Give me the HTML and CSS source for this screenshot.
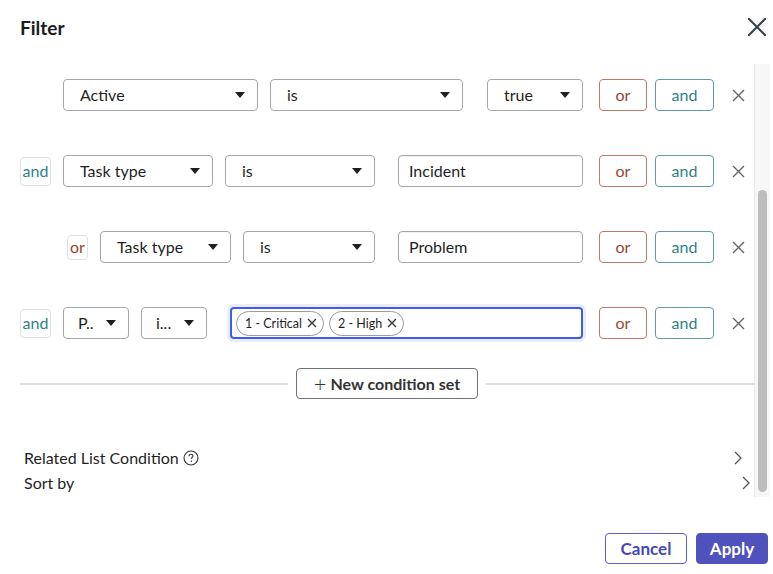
FILE: index.html
```html
<!DOCTYPE html>
<html lang="en">
<head>
    <meta charset="UTF-8">
    <title>Filter</title>
    <link rel="stylesheet" href="styles.css">
</head>
<body>
<div class="dialog">

    <!-- Header -->
    <header class="head">
        <h1>Filter</h1>
        <button class="close" aria-label="Close">
            <svg width="18" height="18" viewBox="0 0 18 18"><path d="M1 1 L17 17 M17 1 L1 17" stroke="#3a4250" stroke-width="2.2" stroke-linecap="round" fill="none"/></svg>
        </button>
    </header>

    <div class="body">
        <div class="scroll">

            <!-- Condition 1 -->
            <div class="row">
                <div class="cond first">
                    <div class="select w-active">Active</div>
                    <div class="select w-is1">is</div>
                    <div class="select value w-true">true</div>
                </div>
                <div class="actions">
                    <button class="btn-or">or</button>
                    <button class="btn-and">and</button>
                    <span class="remove"><svg width="13" height="13" viewBox="0 0 13 13"><path d="M1 1 L12 12 M12 1 L1 12" stroke="#666" stroke-width="1.4" fill="none"/></svg></span>
                </div>
            </div>

            <!-- Condition 2 -->
            <div class="row">
                <div class="cond">
                    <span class="tag tag-and">and</span>
                    <div class="select w-task">Task type</div>
                    <div class="select w-is2">is</div>
                    <div class="input value w-text">Incident</div>
                </div>
                <div class="actions">
                    <button class="btn-or">or</button>
                    <button class="btn-and">and</button>
                    <span class="remove"><svg width="13" height="13" viewBox="0 0 13 13"><path d="M1 1 L12 12 M12 1 L1 12" stroke="#666" stroke-width="1.4" fill="none"/></svg></span>
                </div>
            </div>

            <!-- Condition 3 (nested or) -->
            <div class="row">
                <div class="cond nested">
                    <span class="tag tag-or">or</span>
                    <div class="select w-task2">Task type</div>
                    <div class="select w-is3">is</div>
                    <div class="input value w-text">Problem</div>
                </div>
                <div class="actions">
                    <button class="btn-or">or</button>
                    <button class="btn-and">and</button>
                    <span class="remove"><svg width="13" height="13" viewBox="0 0 13 13"><path d="M1 1 L12 12 M12 1 L1 12" stroke="#666" stroke-width="1.4" fill="none"/></svg></span>
                </div>
            </div>

            <!-- Condition 4 -->
            <div class="row">
                <div class="cond">
                    <span class="tag tag-and">and</span>
                    <div class="select w-small">P..</div>
                    <div class="select w-small">i...</div>
                    <div class="multi value">
                        <span class="chip">1 - Critical <svg width="10" height="10" viewBox="0 0 10 10"><path d="M1 1 L9 9 M9 1 L1 9" stroke="#333" stroke-width="1.3" fill="none"/></svg></span>
                        <span class="chip">2 - High <svg width="10" height="10" viewBox="0 0 10 10"><path d="M1 1 L9 9 M9 1 L1 9" stroke="#333" stroke-width="1.3" fill="none"/></svg></span>
                    </div>
                </div>
                <div class="actions">
                    <button class="btn-or">or</button>
                    <button class="btn-and">and</button>
                    <span class="remove"><svg width="13" height="13" viewBox="0 0 13 13"><path d="M1 1 L12 12 M12 1 L1 12" stroke="#666" stroke-width="1.4" fill="none"/></svg></span>
                </div>
            </div>

            <!-- Separator with new condition set -->
            <div class="divider">
                <button class="new-set"><span class="plus">+</span> New condition set</button>
            </div>

            <!-- Links -->
            <div class="links">
                <div class="link related">
                    <span>Related List Condition
                        <svg class="help" width="16" height="16" viewBox="0 0 16 16"><circle cx="8" cy="8" r="7" stroke="#333" stroke-width="1.1" fill="none"/><path d="M6 6.2 C6 4.9 7 4.3 8 4.3 C9.1 4.3 10 5 10 6 C10 7.2 8.3 7.4 8.3 8.8" stroke="#333" stroke-width="1.1" fill="none"/><circle cx="8.3" cy="11.2" r="0.75" fill="#333"/></svg>
                    </span>
                    <svg width="8" height="14" viewBox="0 0 8 14"><path d="M1 1 L7 7 L1 13" stroke="#555" stroke-width="1.3" fill="none"/></svg>
                </div>
                <div class="link sort">
                    <span>Sort by</span>
                    <svg width="8" height="14" viewBox="0 0 8 14"><path d="M1 1 L7 7 L1 13" stroke="#555" stroke-width="1.3" fill="none"/></svg>
                </div>
            </div>
        </div>

        <!-- Scrollbar -->
        <div class="scrollbar"><div class="thumb"></div></div>
    </div>

    <!-- Footer -->
    <footer class="foot">
        <button class="cancel">Cancel</button>
        <button class="apply">Apply</button>
    </footer>
</div>
</body>
</html>
```

FILE: styles.css
```css
/* Page */
body {
    margin: 0;
    font-family: 'Lato', 'Noto Sans', sans-serif;
    color: #1f1f1f;
    background: #fff;
}

button {
    font-family: inherit;
    cursor: pointer;
}

.dialog {
    width: 773px;
    height: 574px;
    padding: 0 3px 0 20px;
    box-sizing: border-box;
}

/* Header */
.head {
    height: 54px;
    display: flex;
    align-items: center;
    justify-content: space-between;
}

.head h1 {
    margin: 0;
    font-size: 19px;
    font-weight: 700;
    color: #1b1b1b;
}

.close {
    border: none;
    background: none;
    padding: 0;
    margin-right: 4px;
    width: 18px;
    height: 18px;
    display: flex;
}

/* Body with scroll area */
.body {
    margin-top: 10px;
    height: 433px;
    display: flex;
}

.scroll {
    width: 734px;
    padding-top: 15px;
    box-sizing: border-box;
}

.scrollbar {
    width: 16px;
    background: #f7f7f7;
    border-left: 1px solid #e8e8e8;
    box-sizing: border-box;
    padding: 126px 3px 0 3px;
}

.thumb {
    height: 302px;
    background: #bdbdbd;
    border-radius: 5px;
}

/* Condition rows */
.row {
    height: 32px;
    display: flex;
    align-items: center;
}

.row + .row {
    margin-top: 44px;
}

.cond {
    width: 563px;
    display: flex;
    align-items: center;
    gap: 12px;
}

.cond.first {
    padding-left: 43px;
    box-sizing: border-box;
}

.cond.nested {
    padding-left: 47px;
    box-sizing: border-box;
}

.value {
    margin-left: auto;
}

.select, .input {
    height: 32px;
    box-sizing: border-box;
    border: 1px solid #a3a7ad;
    border-radius: 4px;
    font-size: 16px;
    display: flex;
    align-items: center;
    flex: none;
    padding-bottom: 1px;
}

.select {
    padding-left: 16px;
    padding-right: 12px;
    justify-content: space-between;
}

.select::after {
    content: "";
    border-left: 5.5px solid transparent;
    border-right: 5.5px solid transparent;
    border-top: 6px solid #1f1f1f;
}

.input {
    padding-left: 10px;
    box-shadow: inset 0 1px 1px rgba(0, 0, 0, 0.06);
}

.w-active { width: 195px; }
.w-is1 { width: 193px; }
.w-true { width: 96px; }
.w-task { width: 150px; }
.w-is2 { width: 150px; }
.w-task2 { width: 131px; }
.w-is3 { width: 132px; }
.w-text { width: 185px; }
.w-small { width: 66px; padding-left: 14px; }

/* Connector tags */
.tag {
    height: 29px;
    box-sizing: border-box;
    border: 1px solid #e1e1e1;
    border-radius: 4px;
    font-size: 16px;
    display: flex;
    align-items: center;
    justify-content: center;
    flex: none;
    padding-bottom: 1px;
}

.tag-and {
    width: 31px;
    color: #2f7f86;
}

.tag-or {
    width: 21px;
    height: 25px;
    color: #9e4330;
}

/* Multi value input */
.multi {
    width: 353px;
    height: 32px;
    box-sizing: border-box;
    border: 2px solid #3f5de8;
    border-radius: 4px;
    box-shadow: 0 0 0 3px #eaedfd;
    display: flex;
    align-items: center;
    gap: 5px;
    padding-left: 4px;
}

.chip {
    height: 25px;
    box-sizing: border-box;
    border: 1px solid #9c9c9c;
    border-radius: 13px;
    font-size: 12.5px;
    display: flex;
    align-items: center;
    gap: 5px;
    padding: 0 6px 0 8px;
}

/* Or / and buttons */
.actions {
    display: flex;
    align-items: center;
    margin-left: 16px;
}

.btn-or, .btn-and {
    height: 32px;
    background: #fff;
    border-radius: 4px;
    font-size: 16px;
    padding: 0 0 1px;
}

.btn-or {
    width: 48px;
    border: 1px solid #bd7a6c;
    color: #9e4330;
}

.btn-and {
    width: 59px;
    margin-left: 8px;
    border: 1px solid #5d9ea4;
    color: #2f7f86;
}

.remove {
    margin-left: 18px;
    display: flex;
}

/* Divider */
.divider {
    margin-top: 29px;
    height: 31px;
    display: flex;
    align-items: center;
    justify-content: center;
    background: linear-gradient(#dedede, #dedede) no-repeat center / 100% 2px;
}

.new-set {
    width: 182px;
    height: 31px;
    background: #fff;
    border: 1px solid #6e737b;
    border-radius: 4px;
    font-size: 16px;
    font-weight: 700;
    color: #333;
    padding: 0;
    box-shadow: 0 0 0 8px #fff;
}

.plus {
    font-weight: 300;
    font-size: 22px;
    line-height: 1;
    vertical-align: -2px;
}

/* Links */
.links {
    margin-top: 46px;
    padding-left: 4px;
}

.link {
    height: 25px;
    display: flex;
    align-items: center;
    justify-content: space-between;
    font-size: 16px;
}

.link span {
    display: flex;
    align-items: center;
    gap: 4px;
}

.related {
    padding-right: 12px;
}

.sort {
    padding-right: 4px;
}

/* Footer */
.foot {
    margin-top: 36px;
    display: flex;
    justify-content: flex-end;
    gap: 9px;
    padding-right: 2px;
}

.cancel, .apply {
    height: 31px;
    border-radius: 4px;
    font-size: 17px;
    font-weight: 700;
    padding: 0;
}

.cancel {
    width: 82px;
    background: #fff;
    border: 1px solid #5b5fc7;
    color: #4649b5;
}

.apply {
    width: 72px;
    background: #4f52bd;
    border: 1px solid #4f52bd;
    color: #fff;
}
```
